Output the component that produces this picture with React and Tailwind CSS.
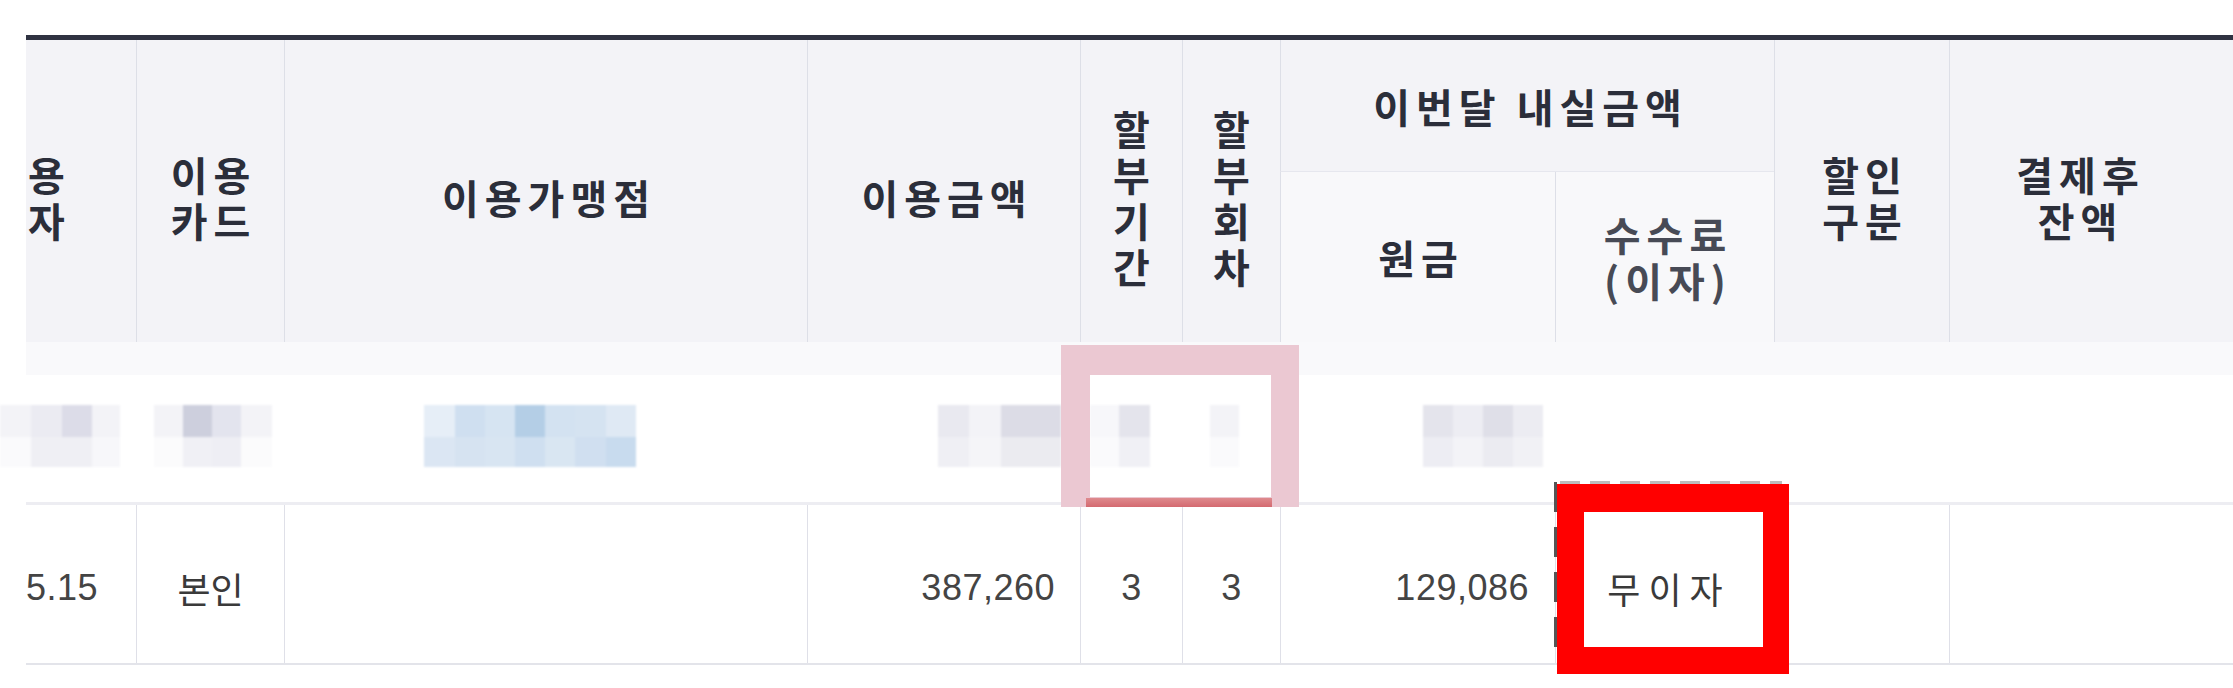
import React from "react";

const COLS =
  "grid grid-cols-[110px_148px_523px_273px_102px_98px_275px_219px_175px_256px]";

const BLUR = [
  {
    off: -26,
    w: [31, 31, 30, 28],
    r1: ["#f3f3f7", "#ebebf2", "#dcdce8", "#f3f3f7"],
    r2: ["#fafafc", "#efeff4", "#efeff4", "#f7f7fa"],
  },
  {
    off: 18,
    w: [29, 29, 29, 31],
    r1: ["#f3f3f7", "#cdcfdd", "#e3e4ee", "#f3f3f7"],
    r2: ["#fbfbfc", "#f0f0f5", "#eeeef4", "#fbfbfc"],
  },
  {
    off: 140,
    w: [31, 30, 30, 30, 30, 31, 30],
    r1: ["#e6eef7", "#cfdff0", "#d6e4f2", "#b4cee6", "#d3e2f1", "#d5e3f1", "#dfe9f4"],
    r2: ["#dbe6f3", "#d6e3f1", "#d8e5f2", "#cfdff0", "#d9e6f2", "#d0dff0", "#c8dbee"],
  },
  {
    off: 131,
    w: [31, 32, 29, 31],
    r1: ["#e9e9f0", "#f3f3f7", "#dcdce6", "#dcdce6"],
    r2: ["#efeff4", "#f5f5f8", "#ebebf0", "#ebebf0"],
  },
  {
    off: 10,
    w: [29, 31],
    r1: ["#f7f7fa", "#e4e4ec"],
    r2: ["#fafafc", "#f0f0f5"],
  },
  { off: 28, w: [29], r1: ["#f3f3f7"], r2: ["#fafafc"] },
  {
    off: 143,
    w: [30, 30, 30, 30],
    r1: ["#e4e4ec", "#ededf3", "#dfdfe8", "#ececf2"],
    r2: ["#ededf3", "#f3f3f7", "#ebebf1", "#f1f1f5"],
  },
  null,
  null,
  null,
];

function Pix({ d }) {
  if (!d) return null;
  return (
    <div className="flex flex-col blur-[1px]" style={{ marginLeft: d.off }}>
      <div className="flex h-[32px]">
        {d.w.map((w, i) => (
          <div key={i} style={{ width: w, background: d.r1[i] }} />
        ))}
      </div>
      <div className="flex h-[30px]">
        {d.w.map((w, i) => (
          <div key={i} style={{ width: w, background: d.r2[i] }} />
        ))}
      </div>
    </div>
  );
}

function Lines({ lines, className = "" }) {
  return (
    <div className={`flex flex-col ${className}`}>
      {lines.map((l, i) => (
        <div key={i} className="h-[46px] leading-[46px] whitespace-nowrap">
          {l}
        </div>
      ))}
    </div>
  );
}

export default function App() {
  const H =
    "flex items-center justify-center text-center font-bold text-[#2b2e3a] text-[40px] leading-[46px] font-['Noto_Sans_CJK_KR','Noto_Sans',sans-serif]";
  const NUM =
    "flex items-center pt-[8px] text-[36px] text-[#444444] font-['Liberation_Sans','Noto_Sans_CJK_KR',sans-serif] tracking-[0.5px]";
  const KR =
    "flex items-center justify-center pt-[8px] text-[36px] text-[#3a3a3a] font-['Noto_Sans_CJK_KR','Noto_Sans',sans-serif]";
  const SEP = "border-l border-l-[#dddfe7]";

  return (
    <div className="relative w-[2233px] h-[688px] bg-white overflow-hidden pl-[26px] pt-[35px]">
      {/* header */}
      <div
        className={`${COLS} grid-rows-[132px_170px] border-t-[5px] border-t-[#2f3241] bg-[#f3f3f7]`}
      >
        <div className={`${H} row-span-2 !justify-start pl-[2px] pt-[12px] tracking-[6px]`}>
          <Lines lines={["용", "자"]} />
        </div>
        <div className={`${H} row-span-2 ${SEP} pt-[12px] pl-[6px] tracking-[6px]`}>
          <Lines lines={["이용", "카드"]} />
        </div>
        <div className={`${H} row-span-2 ${SEP} pt-[12px] pl-[6px] tracking-[6px]`}>
          이용가맹점
        </div>
        <div className={`${H} row-span-2 ${SEP} pt-[12px] pl-[6px] tracking-[6px]`}>
          이용금액
        </div>
        <div className={`${H} row-span-2 ${SEP} pt-[12px]`}>
          <Lines lines={["할", "부", "기", "간"]} />
        </div>
        <div className={`${H} row-span-2 ${SEP} pt-[12px]`}>
          <Lines lines={["할", "부", "회", "차"]} />
        </div>
        <div
          className={`${H} col-span-2 ${SEP} border-b border-b-[#e6e7ee] pl-[6px] tracking-[6px]`}
        >
          이번달 내실금액
        </div>
        <div className={`${H} row-span-2 ${SEP} pt-[12px] pl-[6px] tracking-[6px]`}>
          <Lines lines={["할인", "구분"]} />
        </div>
        <div className={`${H} row-span-2 ${SEP} pt-[12px] pl-[6px] tracking-[6px]`}>
          <Lines lines={["결제후", "잔액"]} />
        </div>
        <div className={`${H} ${SEP} bg-[#f8f8fa] pl-[6px] tracking-[6px]`}>원금</div>
        <div
          className={`${H} ${SEP} bg-[#f8f8fa] !font-semibold !text-[#474a55] pl-[6px] tracking-[6px]`}
        >
          <Lines lines={["수수료", "(이자)"]} />
        </div>
      </div>

      {/* blurred row */}
      <div
        className={`${COLS} h-[163px] border-b-[3px] border-b-[#ededf2] bg-[linear-gradient(to_bottom,#f9f9fb_0px,#f9f9fb_33px,#ffffff_33px)]`}
      >
        {BLUR.map((d, i) => (
          <div key={i} className="pt-[63px]">
            <Pix d={d} />
          </div>
        ))}
      </div>

      {/* data row */}
      <div className={`${COLS} h-[160px] border-b-2 border-b-[#e3e4ea] bg-white`}>
        <div className={`${NUM} justify-start`}>5.15</div>
        <div className={`${KR} border-l border-l-[#dfe0e8]`}>본인</div>
        <div className="border-l border-l-[#dfe0e8]" />
        <div className={`${NUM} justify-end pr-[25px] border-l border-l-[#dfe0e8]`}>
          387,260
        </div>
        <div className={`${NUM} justify-center border-l border-l-[#dfe0e8]`}>3</div>
        <div className={`${NUM} justify-center border-l border-l-[#dfe0e8]`}>3</div>
        <div className={`${NUM} justify-end pr-[26px] border-l border-l-[#dfe0e8]`}>
          129,086
        </div>
        <div className={`${KR} tracking-[8px] pl-[8px] border-l border-l-[#dfe0e8]`}>
          무이자
        </div>
        <div className="border-l border-l-[#dfe0e8]" />
        <div className="border-l border-l-[#dfe0e8]" />
      </div>

      {/* pink highlight overlay */}
      <div className="absolute left-[1061px] top-[345px] w-[238px] h-[162px] border-l-[29px] border-r-[28px] border-t-[30px] border-b-[10px] border-[#ebc8d2]" />
      <div className="absolute left-[1086px] top-[498px] w-[186px] h-[9px] bg-[linear-gradient(to_bottom,#de8a8e,#d46a70)]" />

      {/* faint dashed remnants behind red box */}
      <div className="absolute left-[1554px] top-[482px] w-[3px] h-[166px] bg-[repeating-linear-gradient(to_bottom,#555555_0px,#555555_30px,transparent_30px,transparent_45px)]" />
      <div className="absolute left-[1560px] top-[481px] w-[222px] h-[3px] bg-[repeating-linear-gradient(to_right,#bdbdbd_0px,#bdbdbd_20px,transparent_20px,transparent_30px)]" />

      {/* red annotation box */}
      <div className="absolute left-[1557px] top-[484px] w-[232px] h-[190px] border-l-[27px] border-r-[26px] border-t-[28px] border-b-[27px] border-[#ff0000]" />
    </div>
  );
}
